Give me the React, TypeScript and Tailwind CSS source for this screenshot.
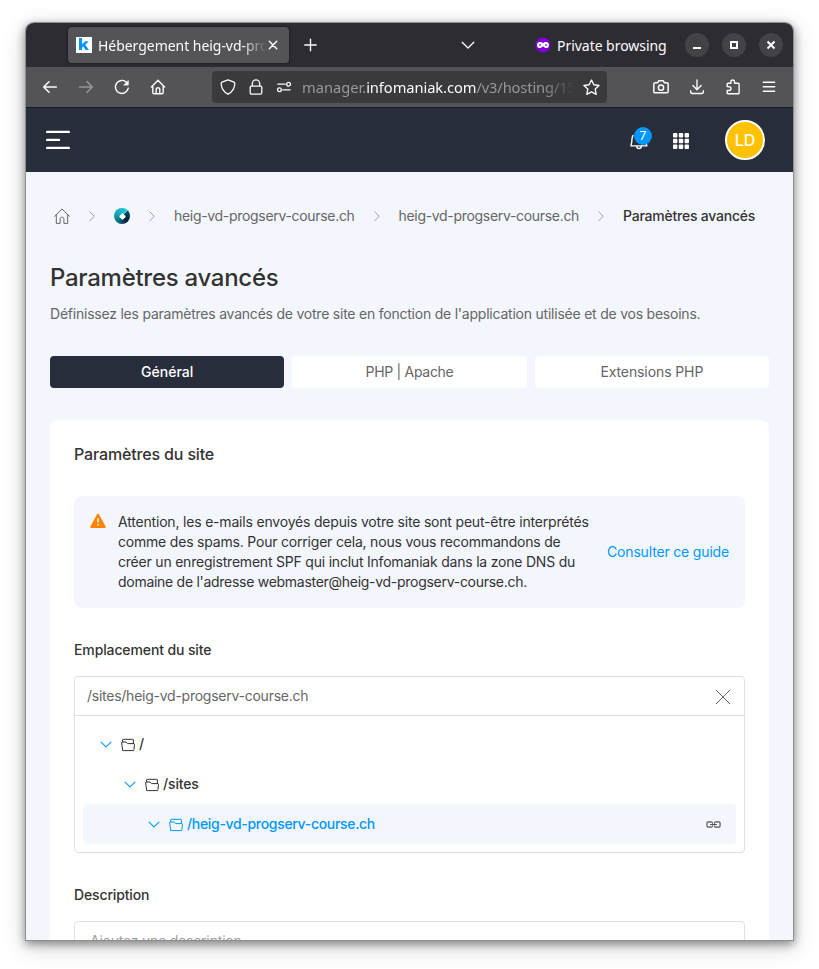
import type { ReactNode } from "react";

type IconProps = {
  size?: number;
  box?: string;
  stroke?: string;
  sw?: number;
  children: ReactNode;
  className?: string;
};

function Icon({ size = 16, box, stroke = "#fbfbfe", sw = 1.3, children, className = "" }: IconProps) {
  return (
    <svg
      width={size}
      height={size}
      viewBox={box ?? "0 0 16 16"}
      fill="none"
      stroke={stroke}
      strokeWidth={sw}
      strokeLinecap="round"
      strokeLinejoin="round"
      className={"shrink-0 " + className}
    >
      {children}
    </svg>
  );
}

function TitleBar() {
  return (
    <div className="flex h-11 shrink-0 items-center bg-[#2d2c32] font-['Noto_Sans',sans-serif] text-[14px] text-[#fbfbfe]">
      <div className="ml-[42px] flex h-9 w-[221px] items-center rounded bg-[#545358] pl-2 shadow-[0_0_3px_rgba(0,0,0,0.6)]">
        <svg width="16" height="16" viewBox="0 0 16 16" className="shrink-0">
          <rect width="16" height="16" fill="#fff" />
          <path d="M3 1h3v6.2L9.300 4.300h3.500L9.300 7.700 12.900 13H9.500L7.200 9.600 6 10.700V13H3z" fill="#0098ff" />
        </svg>
        <div className="ml-[6px] w-[169px] overflow-hidden tracking-[-0.04px] whitespace-nowrap [mask-image:linear-gradient(to_right,black_85%,transparent)]">
          Hébergement heig-vd-progserv
        </div>
        <Icon size={12} box="0 0 12 12" sw={1.5}>
          <path d="M2.300 2.300l7.400 7.400M9.700 2.300L2.300 9.700" />
        </Icon>
      </div>
      <Icon className="ml-[14px]" sw={1.4}>
        <path d="M7.500 2.300v11.400M1.800 8h11.400" />
      </Icon>
      <Icon className="ml-[141px]" sw={1.3}>
        <path d="M2.200 5.200L8 11l5.800-5.800" />
      </Icon>
      <svg width="16" height="16" viewBox="0 0 16 16" className="ml-[59px] shrink-0">
        <circle cx="8" cy="8" r="7.600" fill="#8000d7" />
        <path
          d="M8 6.300C7.100 5.300 6.200 4.900 4.900 4.900 3.200 4.900 2 6.100 2 8s1.200 3.100 2.800 3.100c1.300 0 2-.8 3.200-1.800 1.200 1 1.900 1.800 3.200 1.800C12.800 11.100 14 9.900 14 8s-1.200-3.100-2.900-3.100c-1.300 0-2.200.4-3.100 1.400z"
          fill="#fff"
        />
        <ellipse cx="5" cy="8" rx="1.200" ry=".8" fill="#8000d7" />
        <ellipse cx="11" cy="8" rx="1.200" ry=".8" fill="#8000d7" />
      </svg>
      <span className="ml-1.5 w-[110px] tracking-[-0.04px] whitespace-nowrap">Private browsing</span>
      <div className="ml-[18px] flex gap-[13px]">
        <div className="flex size-6 items-center justify-center rounded-full bg-[#434247]">
          <svg width="16" height="16" viewBox="0 0 16 16">
            <path d="M4 10h8v2H4z" fill="#fff" />
          </svg>
        </div>
        <div className="flex size-6 items-center justify-center rounded-full bg-[#434247]">
          <svg width="16" height="16" viewBox="0 0 16 16">
            <path d="M5 5h6v6H5z" fill="none" stroke="#fff" strokeWidth="2" />
          </svg>
        </div>
        <div className="flex size-6 items-center justify-center rounded-full bg-[#434247]">
          <svg width="16" height="16" viewBox="0 0 16 16">
            <path d="M4.500 4.500l7 7M11.500 4.500l-7 7" fill="none" stroke="#fff" strokeWidth="2" />
          </svg>
        </div>
      </div>
    </div>
  );
}

function ToolButton({ children }: { children: ReactNode }) {
  return <div className="flex w-9 items-center justify-center">{children}</div>;
}

function ToolBar() {
  return (
    <div className="flex h-[41px] shrink-0 items-center border-b border-[#1c1b22] bg-[#545358] pl-1.5">
      <ToolButton>
        <Icon sw={1.5}>
          <path d="M14.300 8H1.700M7 2.700L1.700 8 7 13.300" />
        </Icon>
      </ToolButton>
      <ToolButton>
        <Icon sw={1.500} stroke="#98979b">
          <path d="M1.700 8h12.600M9 2.700L14.300 8 9 13.300" />
        </Icon>
      </ToolButton>
      <ToolButton>
        <Icon sw={1.400}>
          <path d="M14.300 9.200A6.500 6.500 0 1 1 12.600 3.400" />
          <path d="M14.300 1.800v4.300H10z" fill="#fbfbfe" strokeWidth=".7" />
        </Icon>
      </ToolButton>
      <ToolButton>
        <Icon sw={1.400} className="-ml-px">
          <path d="M1.400 7.900L8 1.300l6.600 6.600M2.800 6.900v6.500c0 .8.500 1.300 1.300 1.300h7.800c.8 0 1.300-.5 1.300-1.300V6.900M6.200 14.400V10.500c0-1 .7-1.800 1.800-1.800s1.800.8 1.800 1.800v3.900" />
        </Icon>
      </ToolButton>
      <div className="ml-9 flex h-8 w-[395px] items-center rounded bg-[#3a393d] pl-2 font-['Noto_Sans',sans-serif] text-[14.67px]">
        <Icon sw={1.300}>
          <path d="M8 .9l6 2.300c.6.2.8.6.8 1.200-.1 4.900-2.500 8.500-6.800 10.700C3.700 12.900 1.300 9.300 1.200 4.400c0-.6.2-1 .8-1.200z" />
        </Icon>
        <Icon className="ml-3" sw={1.300}>
          <path d="M4.300 7V4.500a3.700 3.700 0 0 1 7.400 0V7M3.300 7.200h9.400c.7 0 1.100.4 1.100 1.100v5.400c0 .9-.5 1.400-1.400 1.400H3.600c-.9 0-1.400-.5-1.400-1.400V8.300c0-.7.4-1.100 1.100-1.100z" />
        </Icon>
        <Icon className="ml-3" sw={1.300}>
          <path d="M1.800 5.200h7.500M6.700 10.800h7.500" />
          <circle cx="12.600" cy="5.200" r="1.900" />
          <circle cx="3.400" cy="10.800" r="1.900" />
        </Icon>
        <div className="ml-2.5 w-[273px] overflow-hidden whitespace-nowrap text-[#98979b] [mask-image:linear-gradient(to_right,black_88%,transparent)]">
          manager.<span className="tracking-[-0.06px] text-[#fbfbfe]">infomaniak.com</span>
          <span className="tracking-[-0.12px]">/v3/hosting/1536</span>
        </div>
        <Icon className="ml-[7.500px]" size={17} sw={1.300}>
          <path d="M8 1l2.200 4.400 4.900.7-3.600 3.400.9 4.900L8 12.100l-4.400 2.300.9-4.900L.9 6.100l4.900-.7z" />
        </Icon>
      </div>
      <div className="ml-9 flex">
        <ToolButton>
          <Icon sw={1.500}>
            <path d="M2.200 3.700h2.500l1-1.900h4.600l1 1.900h2.500c.9 0 1.400.5 1.400 1.400v7.300c0 .9-.5 1.400-1.400 1.400H2.200c-.9 0-1.400-.5-1.400-1.400V5.100c0-.9.500-1.400 1.400-1.400z" />
            <circle cx="8" cy="8.700" r="2.600" />
          </Icon>
        </ToolButton>
        <ToolButton>
          <Icon sw={1.400}>
            <path d="M8 1v9.500M3.900 6.600L8 10.700l4.100-4.100M1.700 11.700v1c0 1.100.7 1.800 1.800 1.800h9c1.100 0 1.800-.7 1.800-1.800v-1" />
          </Icon>
        </ToolButton>
        <ToolButton>
          <Icon sw={1.400}>
            <path d="M2.200 7.500V5.200c0-.6.300-.9.900-.9h2.800V2.800a1.800 1.800 0 0 1 3.600 0v1.500h3.700c.6 0 .9.300.9.900v8.700c0 .6-.3.900-.9.900H3.100c-.6 0-.9-.3-.9-.9v-2.400h1.900a1.900 1.900 0 0 0 0-3.800z" />
          </Icon>
        </ToolButton>
        <ToolButton>
          <Icon sw={1.400}>
            <path d="M2.300 3.300h11.400M2.300 7.800h11.400M2.300 12.300h11.400" />
          </Icon>
        </ToolButton>
      </div>
    </div>
  );
}

function AppHeader() {
  return (
    <header className="flex h-16 shrink-0 items-center bg-[#282d3c] pl-5">
      <svg width="24" height="20" viewBox="0 0 24 20" className="shrink-0" stroke="#fff" strokeWidth="2.400" strokeLinecap="round">
        <path d="M1.200 1.900h21.600M1.200 9.900h11.800M1.200 17.900h21.600" />
      </svg>
      <div className="relative ml-[559px] size-5">
        <Icon size={20} box="0 0 20 20" sw={1.400} stroke="#fff">
          <path d="M4 5.500C2.800 7.200 3 9 2.800 11.500 2.600 13.300 2 14.300 2 15.900h15.800c0-1.500-1.200-2.500-1.400-4.400M7.700 16.200a2.300 2.300 0 0 0 4.600 0" />
        </Icon>
        <span className="absolute -top-[3px] left-[5px] flex size-[18px] items-center justify-center rounded-full bg-[#0098ff] text-xs leading-none text-white">7</span>
      </div>
      <svg width="16" height="16" viewBox="0 0 16 16" fill="#fff" className="mt-0.5 ml-6 shrink-0">
        {[0, 5.8, 11.6].map((y) => [0, 5.8, 11.6].map((x) => <rect key={x + "-" + y} x={x} y={y} width="4.400" height="4.400" rx=".9" />))}
      </svg>
      <div className="ml-9 flex size-10 items-center justify-center rounded-full border-2 border-white bg-[#ffc100] text-base font-medium text-white">
        LD
      </div>
    </header>
  );
}

function Crumb() {
  return (
    <Icon size={12} box="0 0 12 12" sw={1} stroke="#9f9f9f">
      <path d="M3.800 1.800L8.300 6.300l-4.500 4.400" />
    </Icon>
  );
}

function Breadcrumb() {
  return (
    <nav className="flex h-5 items-center whitespace-nowrap text-sm text-[#666]">
      <Icon className="ml-1" stroke="#666" sw={1}>
        <path d="M.6 8.300L8 .9l7.400 7.400M2.300 6.700v8.700h3.800v-4.200c0-1.300.7-2 1.900-2s1.900.7 1.900 2v4.200h3.800V6.700" />
      </Icon>
      <div className="ml-4"><Crumb /></div>
      <div className="ml-4 flex size-4 items-center justify-center rounded-full bg-[conic-gradient(from_45deg,#0b4a5c,#041f33_25%,#087d8e_50%,#16a8bb_70%,#25c9d2)]">
        <span className="size-[5px] rotate-45 rounded-[1px] bg-white" />
      </div>
      <div className="ml-4"><Crumb /></div>
      <span className="ml-4 w-[181px] tracking-[-0.31px]">heig-vd-progserv-course.ch</span>
      <div className="ml-4"><Crumb /></div>
      <span className="ml-[15.500px] w-[181px] tracking-[-0.31px]">heig-vd-progserv-course.ch</span>
      <div className="ml-[15.500px]"><Crumb /></div>
      <span className="ml-4 font-[550] tracking-[-0.22px] text-[#333]">Paramètres avancés</span>
    </nav>
  );
}

function Folder({ color }: { color: string }) {
  return (
    <Icon size={14} box="0 0 14 14" stroke={color} sw={1}>
      <path d="M1.700 12.100L.6 4.800c-.1-.5.100-.8.600-.8h3.900l1.500 1.600h6.200c.5 0 .7.300.7.700l-.6 5.500c-.1.500-.3.800-.9.800H2.500c-.4 0-.7-.1-.8-.5zM1.600 3.800V2c0-.5.200-.7.700-.7h9.400c.5 0 .7.200.7.700v3.500" />
    </Icon>
  );
}

function TreeRow({ label, indent, active }: { label: string; indent: string; active?: boolean }) {
  return (
    <div className={"flex h-10 items-center rounded pr-[15.500px] text-sm font-[550] " + indent + (active ? " bg-[#f3f6fd] tracking-[-0.32px] text-[#0098ff]" : " tracking-[-0.15px] text-[#333]")}>
      <Icon size={12} box="0 0 12 12" stroke="#0098ff" sw={1.1}>
        <path d="M1 4.200l5 4.600 5-4.600" />
      </Icon>
      <div className="ml-[9px] mt-px"><Folder color={active ? "#0098ff" : "#333"} /></div>
      <span className="ml-1 grow">{label}</span>
      {active && (
        <Icon size={15} box="0 0 15 15" stroke="#555" sw={1.200} className="mt-px">
          <path d="M6.500 6.200c0-.9-.5-1.400-1.400-1.400H2.300C1.400 4.800.9 5.300.9 6.200v2.600c0 .9.500 1.400 1.400 1.400h2.800c.9 0 1.400-.5 1.400-1.400M8.500 6.200c0-.9.5-1.400 1.400-1.400h2.800c.9 0 1.400.5 1.400 1.400v2.600c0 .9-.5 1.400-1.400 1.400H9.900c-.9 0-1.400-.5-1.400-1.400M4.500 7.500h6" />
        </Icon>
      )}
    </div>
  );
}

function SettingsCard() {
  return (
    <section className="mt-8 grow rounded-t-lg bg-white px-6 pt-6">
      <h2 className="text-base leading-5 font-medium tracking-[-0.15px] text-[#333]">Paramètres du site</h2>
      <div className="mt-8 flex h-28 items-center rounded-lg bg-[#f3f6fd] px-4 text-sm leading-5">
        <svg width="16" height="16" viewBox="0 0 16 16" className="mt-4 shrink-0 self-start">
          <path d="M6.900 1.400c.5-.8 1.700-.8 2.200 0l6.500 12c.4.800 0 1.600-.9 1.600H1.300c-.9 0-1.300-.8-.9-1.600z" fill="#ff8500" transform="translate(0 1)" />
          <path d="M8 6.300v4.200M8 12.100v1.500" stroke="#fff" strokeWidth="1.500" />
        </svg>
        <p className="ml-3 w-[489px] whitespace-nowrap text-[#333]">
          <span className="tracking-[-0.19px]">Attention, les e-mails envoyés depuis votre site sont peut-être interprétés</span>
          <br />
          <span className="tracking-[-0.2px]">comme des spams. Pour corriger cela, nous vous recommandons de</span>
          <br />
          <span className="tracking-[-0.21px]">créer un enregistrement SPF qui inclut Infomaniak dans la zone DNS du</span>
          <br />
          <span className="tracking-[-0.28px]">domaine de l'adresse webmaster@heig-vd-progserv-course.ch.</span>
        </p>
        <a className="whitespace-nowrap tracking-[-0.17px] text-[#0098ff]">Consulter ce guide</a>
      </div>
      <h3 className="mt-8 text-sm leading-5 font-[550] tracking-[-0.12px] text-[#333]">Emplacement du site</h3>
      <div className="mt-4 h-[177px] rounded border border-[#e0e0e0]">
        <div className="flex h-[39px] items-center justify-between border-b border-[#e0e0e0] pr-[13px] pl-3 text-sm text-[#666]">
          <span className="tracking-[-0.25px]">/sites/heig-vd-progserv-course.ch</span>
          <Icon size={16} stroke="#666" sw={1} className="mt-0.5">
            <path d="M1.200 1.200l13.600 13.600M14.800 1.200L1.200 14.800" />
          </Icon>
        </div>
        <div className="p-2">
          <TreeRow label="/" indent="pl-[17px]" />
          <TreeRow label="/sites" indent="pl-[41px]" />
          <TreeRow label="/heig-vd-progserv-course.ch" indent="pl-[65px]" active />
        </div>
      </div>
      <h3 className="mt-8 text-sm leading-5 font-[550] tracking-[-0.14px] text-[#333]">Description</h3>
      <div className="mt-4 h-10 rounded border border-[#e0e0e0] px-[15px] text-sm leading-[38px] tracking-[-0.22px] text-[#9f9f9f]">
        Ajoutez une description
      </div>
    </section>
  );
}

export default function App() {
  return (
    <div className="h-[969px] w-[819px] overflow-hidden bg-white px-[26px] pt-[23px] font-['Inter','Liberation_Sans',sans-serif]">
      <div className="h-[917px] w-[767px] rounded-t-[8px] shadow-[0_0_0_1px_#8f8f8f,0_3px_10px_1px_rgba(0,0,0,0.42),0_6px_22px_2px_rgba(0,0,0,0.16)]">
        <div className="flex h-full flex-col overflow-hidden rounded-t-[8px]">
          <TitleBar />
          <ToolBar />
          <AppHeader />
          <main className="flex h-[768px] shrink-0 flex-col overflow-hidden bg-[#f3f6fd] px-6 pt-[34px]">
            <Breadcrumb />
            <h1 className="mt-9 h-8 text-2xl leading-8 font-medium tracking-[-0.28px] text-[#333]">Paramètres avancés</h1>
            <p className="mt-[10px] text-sm leading-5 tracking-[-0.225px] whitespace-nowrap text-[#666]">
              Définissez les paramètres avancés de votre site en fonction de l'application utilisée et de vos besoins.
            </p>
            <div className="mt-8 grid grid-cols-3 gap-2 text-center text-sm leading-8 text-[#666]">
              <div className="rounded bg-[#282d3c] font-medium text-white">Général</div>
              <div className="rounded bg-white tracking-[-0.3px]">PHP | Apache</div>
              <div className="rounded bg-white tracking-[-0.1px]">Extensions PHP</div>
            </div>
            <SettingsCard />
          </main>
        </div>
      </div>
    </div>
  );
}
